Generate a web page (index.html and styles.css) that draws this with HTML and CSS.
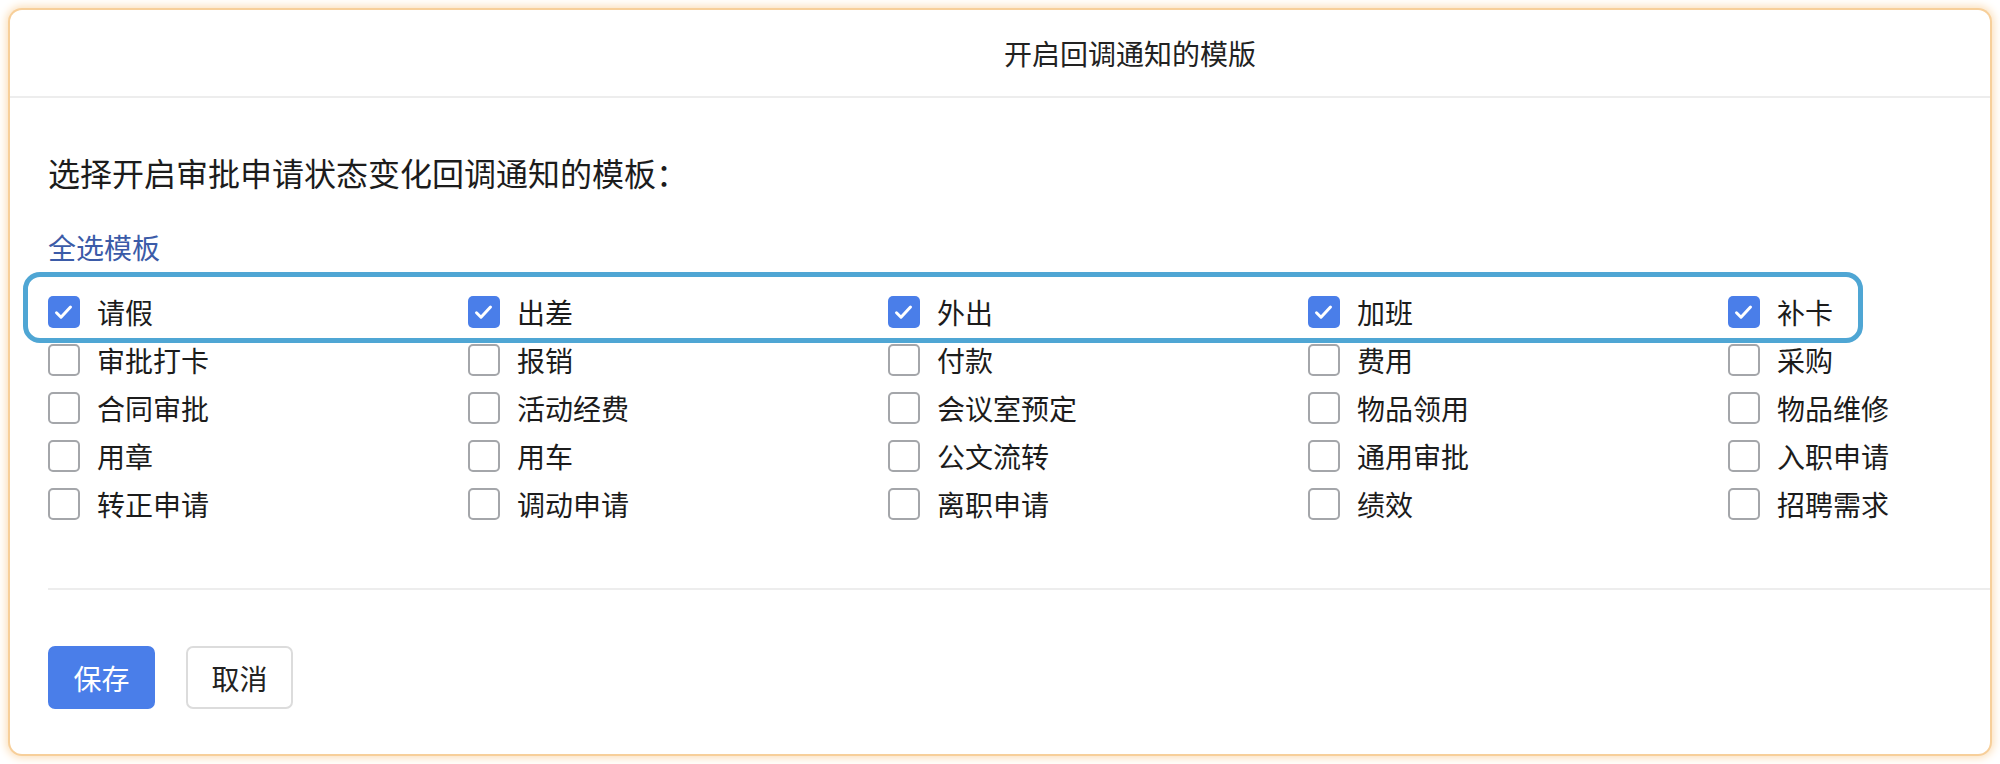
FILE: index.html
```html
<!DOCTYPE html>
<html lang="zh-CN">
<head>
    <meta charset="UTF-8">
    <title>开启回调通知的模版</title>
    <link rel="stylesheet" href="styles.css">
</head>
<body>
    <div class="dialog">
        <div class="dialog-header">开启回调通知的模版</div>

        <div class="dialog-body">
            <p class="intro">选择开启审批申请状态变化回调通知的模板：</p>
            <a class="select-all">全选模板</a>

            <div class="options">
                <div class="highlight"></div>

                <label class="option"><span class="box checked"><svg viewBox="0 0 32 32"><path d="M8.5 16.8 L13 21.2 L22.5 11"/></svg></span>请假</label>
                <label class="option"><span class="box checked"><svg viewBox="0 0 32 32"><path d="M8.5 16.8 L13 21.2 L22.5 11"/></svg></span>出差</label>
                <label class="option"><span class="box checked"><svg viewBox="0 0 32 32"><path d="M8.5 16.8 L13 21.2 L22.5 11"/></svg></span>外出</label>
                <label class="option"><span class="box checked"><svg viewBox="0 0 32 32"><path d="M8.5 16.8 L13 21.2 L22.5 11"/></svg></span>加班</label>
                <label class="option"><span class="box checked"><svg viewBox="0 0 32 32"><path d="M8.5 16.8 L13 21.2 L22.5 11"/></svg></span>补卡</label>

                <label class="option"><span class="box"></span>审批打卡</label>
                <label class="option"><span class="box"></span>报销</label>
                <label class="option"><span class="box"></span>付款</label>
                <label class="option"><span class="box"></span>费用</label>
                <label class="option"><span class="box"></span>采购</label>

                <label class="option"><span class="box"></span>合同审批</label>
                <label class="option"><span class="box"></span>活动经费</label>
                <label class="option"><span class="box"></span>会议室预定</label>
                <label class="option"><span class="box"></span>物品领用</label>
                <label class="option"><span class="box"></span>物品维修</label>

                <label class="option"><span class="box"></span>用章</label>
                <label class="option"><span class="box"></span>用车</label>
                <label class="option"><span class="box"></span>公文流转</label>
                <label class="option"><span class="box"></span>通用审批</label>
                <label class="option"><span class="box"></span>入职申请</label>

                <label class="option"><span class="box"></span>转正申请</label>
                <label class="option"><span class="box"></span>调动申请</label>
                <label class="option"><span class="box"></span>离职申请</label>
                <label class="option"><span class="box"></span>绩效</label>
                <label class="option"><span class="box"></span>招聘需求</label>
            </div>

            <div class="divider"></div>

            <div class="actions">
                <button class="btn btn-primary">保存</button>
                <button class="btn">取消</button>
            </div>
        </div>
    </div>
</body>
</html>
```

FILE: styles.css
```css
body {
    margin: 0;
    padding: 10px;
    background-color: white;
    font-family: "Noto Sans CJK SC", "Liberation Sans", sans-serif;
    color: #1c1c1c;
}
.dialog {
    width: 1980px;
    height: 744px;
    box-sizing: border-box;
    background-color: white;
    border-radius: 12px;
    box-shadow: 0 0 0 2px #f7cf9a, 0 0 9px 4px #fbdfba;
    overflow: hidden;
}
.dialog-header {
    height: 86px;
    line-height: 86px;
    border-bottom: 2px solid #ededed;
    text-align: center;
    padding-left: 260px;
    font-size: 28px;
    color: #222;
}
.dialog-body {
    padding: 54px 0 0 38px;
}
.intro {
    margin: 0;
    font-size: 32px;
    line-height: 40px;
}
.select-all {
    display: block;
    margin-top: 35px;
    font-size: 28px;
    line-height: 40px;
    color: #3b5ba8;
    cursor: pointer;
}
.options {
    position: relative;
    margin-top: 21px;
    display: grid;
    grid-template-columns: repeat(5, 420px);
    grid-auto-rows: 48px;
}
.highlight {
    position: absolute;
    left: -25px;
    top: -16px;
    width: 1840px;
    height: 71px;
    box-sizing: border-box;
    border: 5px solid #4fa6d4;
    border-radius: 17px;
    pointer-events: none;
}
.option {
    display: flex;
    align-items: center;
    gap: 17px;
    font-size: 28px;
    color: #1c1c1c;
}
.box {
    width: 32px;
    height: 32px;
    box-sizing: border-box;
    border: 2px solid #a4a6aa;
    border-radius: 5px;
    background-color: white;
    flex-shrink: 0;
}
.box.checked {
    border: none;
    background-color: #4a7ee9;
}
.box svg {
    display: block;
    width: 32px;
    height: 32px;
}
.box svg path {
    fill: none;
    stroke: white;
    stroke-width: 3;
    stroke-linecap: round;
    stroke-linejoin: round;
}
.divider {
    margin-top: 60px;
    height: 2px;
    background-color: #ededed;
}
.actions {
    margin-top: 56px;
    display: flex;
    gap: 31px;
}
.btn {
    width: 107px;
    height: 63px;
    font-family: inherit;
    font-size: 28px;
    color: #222;
    background-color: white;
    border: 2px solid #dcdcdc;
    border-radius: 7px;
    cursor: pointer;
}
.btn-primary {
    color: white;
    background-color: #4a7ee9;
    border-color: #4a7ee9;
}
```
